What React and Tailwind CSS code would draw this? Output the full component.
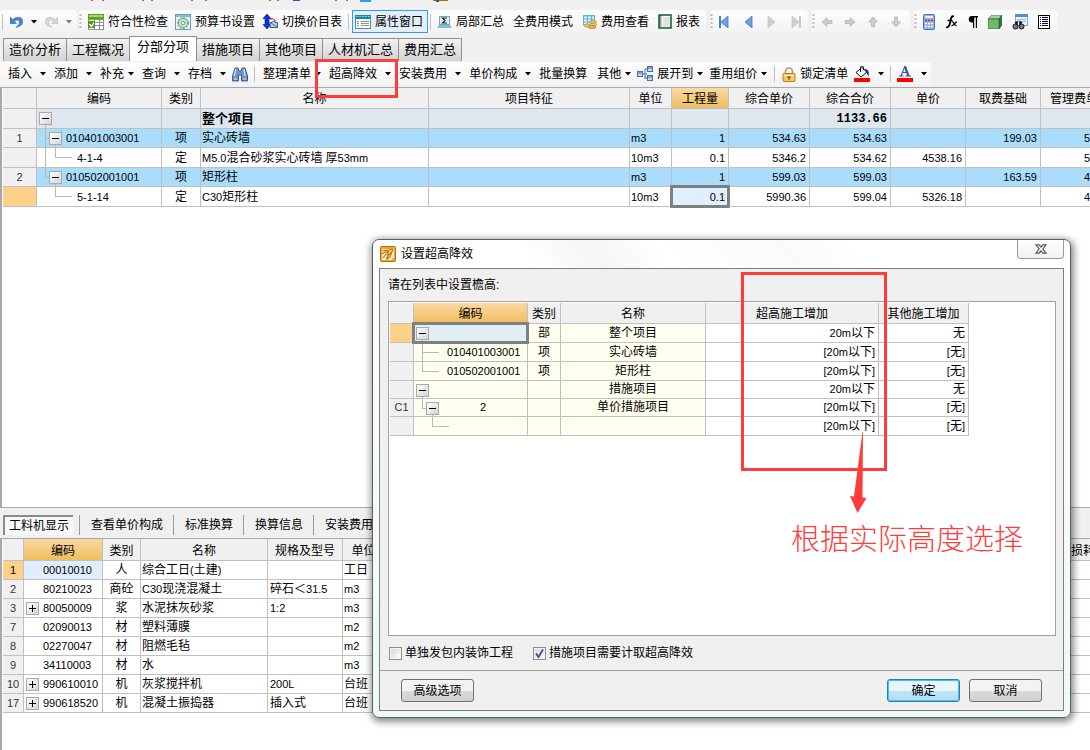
import React, { useState } from 'react';

const Svg = ({ w = 16, h = 16, className = '', children }) => (
  <svg width={w} height={h} viewBox={`0 0 ${w} ${h}`} className={`shrink-0 ${className}`} aria-hidden="true">
    {children}
  </svg>
);

const Caret = ({ color = '#000' }) => (
  <Svg w={6} h={4}>
    <path d="M0 0h6L3 3.500z" fill={color} />
  </Svg>
);

const UndoIcon = () => (
  <Svg w={13} h={14}>
    <path d="M0 2v6.500h6.500L4.500 6.500C6.500 4.400 9.300 4.600 9.300 7.400c0 2-1.300 3.400-3.500 5C9.800 11.800 12.800 10 12.800 6.600 12.800 1.800 7 .8 2.600 4.600z" fill="#4d84d4" stroke="#2f62b0" strokeWidth=".6" />
  </Svg>
);

const RedoIcon = () => (
  <Svg w={13} h={14}>
    <path d="M13 2v6.500H6.500L8.500 6.500C6.500 4.400 3.700 4.600 3.700 7.400c0 2 1.300 3.400 3.500 5C3.200 11.800.2 10 .2 6.600.2 1.800 6 .8 10.400 4.600z" fill="#d6d6d6" stroke="#bdbdbd" strokeWidth=".6" />
  </Svg>
);

const CheckSheetIcon = () => (
  <Svg>
    <rect x="0" y="0" width="16" height="16" fill="#8d938d" />
    <rect x="0" y="0" width="16" height="5" fill="#5aa51a" />
    <rect x="1" y="1" width="14" height="2" fill="#a5dd5a" />
    <path d="M1 6h5v2H1zM7 6h4v2H7zM12 6h3v2h-3zM1 9h5v6H1zM7 9h4v2H7zM12 9h3v2h-3zM7 12h4v3H7zM12 12h3v3h-3z" fill="#fff" />
    <rect x="0" y="7" width="7" height="7" fill="#4c9a10" />
    <path d="M1.500 10l2 2.500 2.500-4" fill="none" stroke="#fff" strokeWidth="1.400" />
  </Svg>
);

const GearSheetIcon = () => (
  <Svg>
    <rect x=".5" y=".5" width="15" height="15" fill="#e8f1f8" stroke="#6f9cc7" />
    <rect x="1" y="1" width="14" height="2" fill="#8db8e0" />
    <circle cx="8" cy="9" r="5.500" fill="none" stroke="#6fa56f" strokeDasharray="2 1.200" />
    <circle cx="8" cy="9" r="4.500" fill="#d6ecd2" stroke="#68a568" />
    <circle cx="8" cy="9" r="1.800" fill="#fff" stroke="#68a568" />
  </Svg>
);

const SwitchIcon = () => (
  <Svg>
    <path d="M5 0l4 4.500H7v6h2L5 15l-4-4.500h2v-6H1z" fill="#0b35d8" stroke="#001a80" strokeWidth=".6" />
    <path d="M8.500 6l1.500-2 1.500 2H13v3" fill="#e9f6ff" stroke="#d22" />
    <path d="M8 13.500V8.500h2l1.500-1.500L13 8.500h2.500v5z" fill="#8fe4ee" stroke="#137" strokeWidth=".8" />
    <path d="M9 9l6 4" stroke="#d22" strokeWidth=".8" />
  </Svg>
);

const PropsIcon = () => (
  <Svg>
    <rect x=".5" y="1.500" width="15" height="13" fill="#fff" stroke="#6c8b91" />
    <rect x="0" y="1" width="16" height="4" fill="#168aa8" />
    <path d="M1 2.500h14" stroke="#7bd7ea" strokeDasharray="2 1" />
    <path d="M2 7.500h2M2 9.500h2M2 11.500h2M6 7.500h8M6 9.500h8M6 11.500h8" stroke="#7e9a86" />
  </Svg>
);

const SumIcon = () => (
  <Svg w={15} h={14}>
    <rect x="2.500" y="1.500" width="10" height="8" fill="#e6eef0" stroke="#7da9b5" />
    <path d="M10 3H5.500L8 5.500 5.500 8H10" fill="none" stroke="#222" strokeWidth="1.200" />
    <path d="M2 10h11l2 3H0z" fill="#7cc4d0" />
  </Svg>
);

const CoinsIcon = () => (
  <Svg w={14} h={15}>
    <rect x="0" y="1" width="12" height="10" fill="#5fb1dd" />
    <path d="M1 3.500h3M5 3.500h3M9 3.500h2M1 6.500h3M5 6.500h3M9 6.500h2M1 9.500h3M5 9.500h3" stroke="#e3f5ff" strokeWidth="2" />
    <ellipse cx="10" cy="8" rx="3.500" ry="1.500" fill="#f2c66a" stroke="#a9752a" strokeWidth=".6" />
    <ellipse cx="10" cy="10.500" rx="3.500" ry="1.500" fill="#f2c66a" stroke="#a9752a" strokeWidth=".6" />
    <ellipse cx="9" cy="13" rx="4" ry="1.500" fill="#e9b450" stroke="#a9752a" strokeWidth=".6" />
    <ellipse cx="4" cy="11.500" rx="3" ry="1.500" fill="#f2c66a" stroke="#a9752a" strokeWidth=".6" />
  </Svg>
);

const ReportIcon = () => (
  <Svg w={14} h={15}>
    <rect x="1" y="1" width="12" height="13" fill="#fff" stroke="#0d5c22" strokeWidth="1.500" />
    <path d="M2.500 1.500v12" stroke="#333" strokeDasharray="1 1" strokeWidth="2" />
    <path d="M5 4h7M5 6h7M5 8h7M5 10h7M5 12h7" stroke="#a9b8c8" strokeWidth=".8" />
  </Svg>
);

const NavIcon = ({ flip, bar, off }) => (
  <Svg w={10} h={12} className={flip ? '-scale-x-100' : ''}>
    {bar && <rect x="0" y="0" width="2" height="12" fill={off ? '#c9c9c9' : '#4a80d0'} />}
    <path d="M9 0v12L2 6z" fill={off ? '#cfcfcf' : '#6f9fe8'} stroke={off ? '#c4c4c4' : '#3f74c8'} strokeWidth=".8" />
  </Svg>
);

const MoveIcon = ({ turn }) => (
  <Svg w={12} h={12} className={turn}>
    <path d="M1 6l5-4.500v3h5v3H6v3z" fill="#cdcdcd" stroke="#b4b4b4" strokeWidth=".8" />
  </Svg>
);

const CalcIcon = () => (
  <Svg w={12} h={16}>
    <rect x=".5" y=".5" width="11" height="15" rx="1" fill="#8db0e6" stroke="#4a6fb5" />
    <rect x="2" y="2" width="8" height="2" fill="#e8f2ff" />
    <path d="M2 6.500h8" stroke="#e02020" strokeWidth="1.500" strokeDasharray="2 1" />
    <path d="M2 9.500h8M2 12.500h8" stroke="#fff" strokeWidth="1.500" strokeDasharray="2 1" />
  </Svg>
);

const FxIcon = () => (
  <Svg w={13} h={14}>
    <path d="M9 1.500C6.500.5 6 3 5.500 6S4 13 1 12.200" fill="none" stroke="#000" strokeWidth="1.800" />
    <path d="M2.500 5.500h5M7 7c2-.8 2 4 4.500 3.500M12 6.800c-2 0-3 4-5.500 4" fill="none" stroke="#000" strokeWidth="1.300" />
  </Svg>
);

const PilcrowIcon = () => (
  <Svg w={10} h={12}>
    <path d="M10 0v1.500H9V12H7.800V1.500H6.200V12H5V6.500H4a3.200 3.200 0 010-6.500z" fill="#000" />
  </Svg>
);

const CubeIcon = () => (
  <Svg w={14} h={14}>
    <path d="M0 4l4-4h10l-3 4z" fill="#9fd59b" stroke="#25602a" strokeWidth=".6" />
    <path d="M11 4l3-4v10l-3 4z" fill="#2b7a33" stroke="#25602a" strokeWidth=".6" />
    <path d="M0 4h11v10H0z" fill="#6fb86c" stroke="#25602a" strokeWidth=".6" />
  </Svg>
);

const FindSheetIcon = () => (
  <Svg>
    <rect x="3.500" y=".5" width="12" height="11" fill="#eef4fc" stroke="#8aa6d0" />
    <rect x="3" y="0" width="13" height="3" fill="#5b8ad0" />
    <path d="M5 5.500h9M5 7.500h9" stroke="#9ab4da" />
    <circle cx="3.500" cy="12.500" r="2.500" fill="#6d7f94" stroke="#111" />
    <circle cx="9.500" cy="12.500" r="2.500" fill="#6d7f94" stroke="#111" />
    <path d="M3 9l2-1v3M10 9L8 8v3" stroke="#111" strokeWidth="1.500" fill="none" />
  </Svg>
);

const ListIcon = () => (
  <Svg w={12} h={14}>
    <rect x=".5" y=".5" width="11" height="13" fill="#fff" stroke="#000" />
    <path d="M2 2.500h1M4 2.500h6M2 4.500h1M4 4.500h6M2 6.500h1M4 6.500h6M2 8.500h1M4 8.500h6M2 10.500h1M4 10.500h6" stroke="#00006a" />
  </Svg>
);

const BinocularsIcon = () => (
  <Svg w={16} h={15}>
    <path d="M3 1h3l1 3h2l1-3h3l2.500 8v5h-6V8h-3v6H.5V9z" fill="#6f95cc" stroke="#2c4f86" strokeWidth=".9" />
    <path d="M4 2l-2 7M12 2l1 7M2 12h3M11 12h3" stroke="#dce9fa" strokeWidth="1.200" />
  </Svg>
);

const ExpandIcon = () => (
  <Svg w={16} h={16}>
    <path d="M6 8h4M8 3v10M8 3h3M8 12h3" stroke="#4a6fb0" fill="none" />
    <rect x=".5" y="5.500" width="5" height="5" fill="#c4d8f5" stroke="#4a6fb0" />
    <rect x="10.500" y=".5" width="5" height="5" fill="#c4d8f5" stroke="#4a6fb0" />
    <rect x="10.500" y="9.500" width="5" height="5" fill="#c4d8f5" stroke="#4a6fb0" />
    <path d="M11 2h4M11 11h4M1 7h4" stroke="#3c62a8" />
  </Svg>
);

const LockIcon = () => (
  <Svg w={14} h={15}>
    <path d="M3.500 7V4.500a3.500 3.500 0 017 0V7" fill="none" stroke="#b09a66" strokeWidth="1.600" />
    <rect x="1" y="6.500" width="12" height="8" rx="1" fill="#f3c860" stroke="#b3801e" />
    <path d="M2 8.500h10" stroke="#fff0b8" />
    <path d="M5.500 9.500h3v1.500H7.500v2h-1v-2h-1z" fill="#6c4a0a" />
  </Svg>
);

const PaintIcon = () => (
  <Svg w={16} h={16}>
    <path d="M2 6.500l6-5 5 4.500-6 5z" fill="#fff" stroke="#111" />
    <path d="M6.500 6V1.500a1.500 1.500 0 013 0V4" fill="none" stroke="#111" />
    <path d="M10 3c4 0 5.500 2 4.500 7.500L12 6z" fill="#16249c" />
    <rect x="0" y="12" width="16" height="4" fill="#f00" />
  </Svg>
);

const FontColorIcon = () => (
  <Svg w={16} h={16}>
    <path d="M7.500 0H9l3.500 9.500H14v1H8.500v-1H10L9.300 7H5.800L5 9.500h1.500v1H2v-1h1.500zM7.500 2.500L6.200 6h2.600z" fill="#33589c" />
    <rect x="0" y="12" width="16" height="4" fill="#f00" />
  </Svg>
);

const AppIcon = () => (
  <Svg>
    <rect x=".5" y=".5" width="15" height="15" rx="1" fill="#f0a52c" stroke="#b96c08" />
    <path d="M2 3h9l3-1v9l-3 3H2z" fill="#fff3d6" />
    <path d="M2 5l5-1M2 8l6-4M3 12l7-9M6 13l6-8M9 4l4-1-3 8-3 2z" stroke="#c8740c" fill="none" strokeWidth="1.200" />
  </Svg>
);

const Sep = ({ className = '' }) => <span className={`h-4 w-px shrink-0 bg-[#bdbdbd] ${className}`} />;

const Grip = () => (
  <Svg w={3} h={15} className="mr-1.5">
    <path d="M1.500 0v15" stroke="#bcbcbc" strokeWidth="2" strokeDasharray="2 2" />
  </Svg>
);

const Group = ({ className = '', children }) => (
  <div className={`flex h-6 shrink-0 items-center rounded-sm bg-gradient-to-b from-[#fdfdfd] to-[#f2f2f2] ${className}`}>
    {children}
  </div>
);

const ToolButton = ({ icon, label, className = '' }) => (
  <button type="button" className={`flex shrink-0 items-center gap-1 whitespace-nowrap ${className}`}>
    {icon}
    {label && <span>{label}</span>}
  </button>
);

const DropButton = ({ label, icon, name, tight, className = '' }) => (
  <button
    type="button"
    aria-label={name}
    className={`flex shrink-0 items-center whitespace-nowrap ${tight ? 'gap-1' : 'gap-2'} ${className}`}
  >
    {icon ? <span className="flex items-center gap-1">{icon}{label}</span> : <span>{label}</span>}
    <Caret />
  </button>
);

const MainToolbar = () => (
  <div className="flex h-[25px] items-center">
    <Group className="w-[77px] pl-0.5">
      <Sep className="mr-[7px]" />
      <button type="button" aria-label="撤销" className="flex items-center gap-2"><UndoIcon /><Caret /></button>
      <button type="button" aria-label="恢复" className="ml-2 flex items-center gap-2"><RedoIcon /><Caret color="#777" /></button>
    </Group>
    <Group className="ml-0.5 pr-1.5">
      <Grip />
      <div className="flex items-center gap-[7px]">
        <ToolButton icon={<CheckSheetIcon />} label="符合性检查" />
        <ToolButton icon={<GearSheetIcon />} label="预算书设置" />
        <ToolButton icon={<SwitchIcon />} label="切换价目表" />
      </div>
      <Sep className="ml-1.5 mr-[3px]" />
      <ToolButton icon={<PropsIcon />} label="属性窗口" className="h-[23px] border border-[#3399ff] bg-[#e3f0fb] pl-0.5 pr-1" />
      <Sep className="ml-0.5 mr-1.5" />
      <ToolButton icon={<SumIcon />} label="局部汇总" className="mr-[9px]" />
      <ToolButton label="全费用模式" className="mr-2.5" />
      <ToolButton icon={<CoinsIcon />} label="费用查看" className="mr-[9px]" />
      <ToolButton icon={<ReportIcon />} label="报表" />
    </Group>
    <Group className="ml-1 w-[98px]">
      <Grip />
      <div className="flex items-center gap-3.5">
        <button type="button" aria-label="首行"><NavIcon bar /></button>
        <button type="button" aria-label="上一行"><NavIcon /></button>
        <button type="button" aria-label="下一行"><NavIcon flip off /></button>
        <button type="button" aria-label="末行"><NavIcon flip bar off /></button>
      </div>
    </Group>
    <Group className="ml-1 w-[98px]">
      <Grip />
      <div className="flex items-center gap-[11px]">
        <button type="button" aria-label="左移"><MoveIcon /></button>
        <button type="button" aria-label="右移"><MoveIcon turn="rotate-180" /></button>
        <button type="button" aria-label="上移"><MoveIcon turn="rotate-90" /></button>
        <button type="button" aria-label="下移"><MoveIcon turn="-rotate-90" /></button>
      </div>
    </Group>
    <Group className="ml-1 pr-2">
      <Grip />
      <div className="flex items-center gap-2.5">
        <button type="button" aria-label="计算器"><CalcIcon /></button>
        <button type="button" aria-label="函数"><FxIcon /></button>
        <button type="button" aria-label="段落"><PilcrowIcon /></button>
        <button type="button" aria-label="图元"><CubeIcon /></button>
        <button type="button" aria-label="查找"><FindSheetIcon /></button>
        <button type="button" aria-label="清单"><ListIcon /></button>
      </div>
    </Group>
  </div>
);

const mainTabs = ['造价分析', '工程概况', '分部分项', '措施项目', '其他项目', '人材机汇总', '费用汇总'];

const MainTabs = () => {
  const [active, setActive] = useState('分部分项');
  return (
    <div className="mt-0.5 flex items-end pl-1 text-[13px]">
      {mainTabs.map((tab) => (
        <button
          key={tab}
          type="button"
          onClick={() => setActive(tab)}
          className={
            tab === active
              ? '-ml-px h-[25px] whitespace-nowrap border-x border-t border-[#8e8f9b] bg-white px-[7px] pb-1 leading-5'
              : '-ml-px h-[23px] whitespace-nowrap border-x border-t border-[#8e8f9b] bg-gradient-to-b from-[#f3f3f3] to-[#d2d2d2] px-[5px] leading-5'
          }
        >
          {tab}
        </button>
      ))}
    </div>
  );
};

const EditToolbar = () => (
  <div className="flex h-[27px] items-center border-b border-[#a7a7ad]">
    <Group className="gap-2 pl-2 pr-1">
      <DropButton label="插入" />
      <DropButton label="添加" />
      <DropButton label="补充" tight />
      <DropButton label="查询" />
      <DropButton label="存档" />
      <button type="button" aria-label="查找" className="-ml-0.5"><BinocularsIcon /></button>
      <Sep className="-ml-0.5" />
      <DropButton label="整理清单" tight />
      <DropButton label="超高降效" />
      <DropButton label="安装费用" />
      <DropButton label="单价构成" />
      <ToolButton label="批量换算" />
      <DropButton label="其他" tight className="ml-0.5" />
      <DropButton icon={<ExpandIcon />} label="展开到" tight className="-ml-0.5" />
      <DropButton label="重用组价" tight className="-ml-0.5" />
      <Sep className="-mx-px" />
      <ToolButton icon={<LockIcon />} label="锁定清单" />
      <DropButton icon={<PaintIcon />} name="填充颜色" className="-ml-0.5" />
      <Sep className="-mx-0.5" />
      <DropButton icon={<FontColorIcon />} name="字体颜色" />
    </Group>
  </div>
);

// Expand / collapse box of a tree row
const Toggle = ({ open }) => (
  <button
    type="button"
    aria-label={open ? '折叠' : '展开'}
    className="relative z-10 block h-[13px] w-[13px] border border-[#a9a9a9] bg-gradient-to-br from-white to-[#d4d4d8]"
  >
    <svg viewBox="0 0 11 11" className="h-[11px] w-[11px]" shapeRendering="crispEdges">
      <rect x="2" y="5" width="7" height="1" fill="#000" />
      {!open && <rect x="5" y="2" width="1" height="7" fill="#000" />}
    </svg>
  </button>
);

const TreeLines = ({ d }) => (
  <svg className="absolute left-0 top-0 h-5 w-10" viewBox="0 0 40 20" shapeRendering="crispEdges" aria-hidden="true">
    <path d={d} fill="none" stroke="#b9b9b9" />
  </svg>
);

// Latin letters and digits sit one size below the Chinese text
const Mixed = ({ text }) =>
  text.split(/([\x20-\x7e]+)/).map((part, i) => (
    <span key={i} className={i % 2 ? 'text-[11px]' : ''}>{part}</span>
  ));

const cell = 'relative overflow-hidden whitespace-nowrap border-b border-r border-[#c0c0c0] p-0 font-normal';
const gutter = `${cell} bg-[#f0f0f0] text-center text-[11px] text-[#333]`;
const gutterOn = `${cell} bg-[#ffd08a] text-center text-[11px]`;
const head = `${cell} bg-[#f0f0f0] pt-0.5 text-center`;
const headOn = `${cell} bg-gradient-to-b from-[#fad9a0] to-[#f0bd5c] pt-0.5 text-center`;

const quantityRows = [
  { no: '', lines: 'M8.500 16v4', toggle: 'left-0.5', name: '整个项目', kind: '', unit: '', total: '1133.66', top: true },
  { no: '1', lines: 'M8.500 0v20M8.500 9.500h4M18.500 16v4', toggle: 'left-3', code: '010401003001', kind: '项', name: '实心砖墙', unit: 'm3', qty: '1', price: '534.63', total: '534.63', unitPrice: '', base: '199.03', fee: '5' },
  { no: '', lines: 'M8.500 0v20M18.500 0v10M18 9.500h17', code: '4-1-4', kind: '定', name: 'M5.0混合砂浆实心砖墙 厚53mm', unit: '10m3', qty: '0.1', price: '5346.2', total: '534.62', unitPrice: '4538.16', base: '', fee: '5' },
  { no: '2', lines: 'M8.500 0v10M8 9.500h4M18.500 16v4', toggle: 'left-3', code: '010502001001', kind: '项', name: '矩形柱', unit: 'm3', qty: '1', price: '599.03', total: '599.03', unitPrice: '', base: '163.59', fee: '4' },
  { no: '', lines: 'M18.500 0v10M18 9.500h17', code: '5-1-14', kind: '定', name: 'C30矩形柱', unit: '10m3', qty: '0.1', price: '5990.36', total: '599.04', unitPrice: '5326.18', base: '', fee: '4', current: true },
];

const rowStyle = (row) => {
  if (row.top) return 'h-[19px] bg-[#dee6f0]';
  if (row.kind === '项') return 'h-[19px] bg-[#aadcfc]';
  return 'h-5 bg-white';
};

const QuantityTable = () => {
  const num = `${cell} pr-[3px] text-right text-[11px]`;
  return (
    <table className="w-full min-w-[1119px] table-fixed border-separate border-spacing-0 leading-[18px]">
      <colgroup>
        <col className="w-[34px]" />
        <col className="w-[125px]" />
        <col className="w-[39px]" />
        <col className="w-[228px]" />
        <col className="w-[201px]" />
        <col className="w-[42px]" />
        <col className="w-[57px]" />
        <col className="w-[81px]" />
        <col className="w-[81px]" />
        <col className="w-[75px]" />
        <col className="w-[75px]" />
        <col />
      </colgroup>
      <thead>
        <tr className="h-[21px]">
          <th className={gutter} />
          <th className={head}>编码</th>
          <th className={head}>类别</th>
          <th className={head}>名称</th>
          <th className={head}>项目特征</th>
          <th className={head}>单位</th>
          <th className={headOn}>工程量</th>
          <th className={head}>综合单价</th>
          <th className={head}>综合合价</th>
          <th className={head}>单价</th>
          <th className={head}>取费基础</th>
          <th className={`${head} pl-[9px] text-left`}>管理费单</th>
        </tr>
      </thead>
      <tbody>
        {quantityRows.map((row, i) => (
          <tr key={i} className={rowStyle(row)}>
            <td className={row.current ? gutterOn : gutter}>{row.no}</td>
            <td className={`${cell} text-[11px]`}>
              <TreeLines d={row.lines} />
              {row.toggle && <span className={`absolute top-[3px] ${row.toggle}`}><Toggle open /></span>}
              <span className={row.toggle ? 'pl-[29px]' : 'pl-10'}>{row.code}</span>
            </td>
            <td className={`${cell} text-center`}>{row.kind}</td>
            <td className={`${cell} pl-px`}>
              {row.top ? <b className="text-[13px]">{row.name}</b> : <Mixed text={row.name} />}
            </td>
            <td className={cell} />
            <td className={`${cell} pl-px text-[11px]`}>{row.unit}</td>
            <td className={row.current ? 'relative border-b border-r border-[#c0c0c0] bg-[#e0efff] p-0 pr-[3px] text-right text-[11px]' : num}>
              {row.qty}
              {row.current && <span className="absolute -inset-0.5 border-[3px] border-[#808080]" />}
            </td>
            <td className={num}>{row.price}</td>
            <td className={num}>
              {row.top ? <b className="font-['Liberation_Mono'] text-xs leading-[18px]">{row.total}</b> : row.total}
            </td>
            <td className={num}>{row.unitPrice}</td>
            <td className={num}>{row.base}</td>
            <td className={`${cell} pl-[43px] text-[11px]`}>{row.fee}</td>
          </tr>
        ))}
      </tbody>
    </table>
  );
};

const detailTabs = ['查看单价构成', '标准换算', '换算信息', '安装费用'];

const DetailTabs = () => (
  <div className="flex h-[31px] items-center border-b border-[#a7a7ad] pl-[3px] pt-1">
    <button type="button" className="mr-1.5 h-5 whitespace-nowrap border-l-2 border-t-2 border-[#8a8a8a] bg-[#f7f7f7] px-1 leading-[18px]">
      工料机显示
    </button>
    {detailTabs.map((tab) => (
      <button key={tab} type="button" className="h-5 whitespace-nowrap border-l border-[#9a9a9a] pl-[11px] pr-2.5 leading-5">
        {tab}
      </button>
    ))}
  </div>
);

const resources = [
  { no: '1', code: '00010010', kind: '人', name: '综合工日(土建)', spec: '', unit: '工日', current: true },
  { no: '2', code: '80210023', kind: '商砼', name: 'C30现浇混凝土', spec: '碎石＜31.5', unit: 'm3' },
  { no: '3', code: '80050009', kind: '浆', name: '水泥抹灰砂浆', spec: '1:2', unit: 'm3', more: true },
  { no: '7', code: '02090013', kind: '材', name: '塑料薄膜', spec: '', unit: 'm2' },
  { no: '8', code: '02270047', kind: '材', name: '阻燃毛毡', spec: '', unit: 'm2' },
  { no: '9', code: '34110003', kind: '材', name: '水', spec: '', unit: 'm3' },
  { no: '10', code: '990610010', kind: '机', name: '灰浆搅拌机', spec: '200L', unit: '台班', more: true },
  { no: '17', code: '990618520', kind: '机', name: '混凝土振捣器', spec: '插入式', unit: '台班', more: true },
];

const ResourceTable = () => (
  <table className="w-full table-fixed border-separate border-spacing-0 leading-[18px]">
    <colgroup>
      <col className="w-[21px]" />
      <col className="w-[79px]" />
      <col className="w-[38px]" />
      <col className="w-[127px]" />
      <col className="w-[75px]" />
      <col className="w-[38px]" />
      <col />
      <col className="w-[19px]" />
    </colgroup>
    <thead>
      <tr className="h-[22px]">
        <th className={gutter} />
        <th className={headOn}>编码</th>
        <th className={head}>类别</th>
        <th className={head}>名称</th>
        <th className={head}>规格及型号</th>
        <th className={`${head} pl-1`}>单位</th>
        <th className="border-b border-[#c0c0c0] bg-[#f0f0f0] p-0" />
        <th className="overflow-hidden whitespace-nowrap border-b border-[#c0c0c0] bg-[#f0f0f0] p-0 pt-0.5 text-left font-normal">损耗</th>
      </tr>
    </thead>
    <tbody>
      {resources.map((row) => (
        <tr key={row.no} className="h-[19px] bg-white">
          <td className={row.current ? gutterOn : gutter}>{row.no}</td>
          <td className={row.current ? `${cell} bg-[#e0efff] text-[11px]` : `${cell} text-[11px]`}>
            {row.more && <span className="absolute left-0.5 top-[3px]"><Toggle /></span>}
            <span className="pl-[19px]">{row.code}</span>
          </td>
          <td className={`${cell} text-center`}>{row.kind}</td>
          <td className={`${cell} pl-px`}><Mixed text={row.name} /></td>
          <td className={`${cell} pl-0.5`}><Mixed text={row.spec} /></td>
          <td className={`${cell} pl-px`}><Mixed text={row.unit} /></td>
          <td className="border-b border-[#c0c0c0] p-0" />
          <td className="border-b border-[#c0c0c0] p-0" />
        </tr>
      ))}
    </tbody>
  </table>
);

const heightRows = [
  { toggle: 'left-0.5', lines: 'M8.500 16v4', code: '', kind: '部', name: '整个项目', high: '20m以下', other: '无', size: 'h-[19px]', current: true },
  { lines: 'M8.500 0v20M8 9.500h17', code: '010401003001', kind: '项', name: '实心砖墙', high: '[20m以下]', other: '[无]', size: 'h-[19px]' },
  { lines: 'M8.500 0v10M8 9.500h17', code: '010502001001', kind: '项', name: '矩形柱', high: '[20m以下]', other: '[无]', size: 'h-[19px]' },
  { toggle: 'left-0.5', lines: 'M8.500 16v4', code: '', kind: '', name: '措施项目', high: '20m以下', other: '无', size: 'h-[18px]' },
  { no: 'C1', toggle: 'left-3', lines: 'M8.500 0v10M8 9.500h4M18.500 16v4', code: '2', kind: '', name: '单价措施项目', high: '[20m以下]', other: '[无]', size: 'h-[18px]' },
  { lines: 'M18.500 0v10M18 9.500h17', code: '', kind: '', name: '', high: '[20m以下]', other: '[无]', size: 'h-[19px]' },
];

const HeightTable = () => {
  const tinted = `${cell} bg-[#fffff0] text-center`;
  return (
    <table className="w-[579px] table-fixed border-separate border-spacing-0 leading-[17px]">
      <colgroup>
        <col className="w-6" />
        <col className="w-[114px]" />
        <col className="w-[33px]" />
        <col className="w-[145px]" />
        <col className="w-[173px]" />
        <col className="w-[90px]" />
      </colgroup>
      <thead>
        <tr className="h-[21px]">
          <th className={gutter} />
          <th className={headOn}>编码</th>
          <th className={head}>类别</th>
          <th className={head}>名称</th>
          <th className={head}>超高施工增加</th>
          <th className={head}>其他施工增加</th>
        </tr>
      </thead>
      <tbody>
        {heightRows.map((row, i) => (
          <tr key={i} className={row.size}>
            <td className={row.current ? gutterOn : gutter}>{row.no}</td>
            <td className={row.current ? 'relative border-b border-r border-[#c0c0c0] bg-[#e0eff4] p-0' : `${cell} bg-[#fffff0] text-[11px]`}>
              <TreeLines d={row.lines} />
              {row.toggle && <span className={`absolute top-[3px] z-10 ${row.toggle}`}><Toggle open /></span>}
              <span className={row.code === '2' ? 'pl-[66px]' : 'pl-[33px]'}>{row.code}</span>
              {row.current && <span className="absolute -inset-0.5 z-20 border-[3px] border-[#808080]" />}
            </td>
            <td className={tinted}>{row.kind}</td>
            <td className={tinted}>{row.name}</td>
            <td className={`${cell} pr-[3px] text-right`}><Mixed text={row.high} /></td>
            <td className={`${cell} pr-[3px] text-right`}><Mixed text={row.other} /></td>
          </tr>
        ))}
      </tbody>
    </table>
  );
};

const CheckOption = ({ id, label, initial }) => {
  const [checked, setChecked] = useState(initial);
  return (
    <div className="flex items-center gap-[3px]">
      <span className="relative h-[13px] w-[13px]">
        <input
          id={id}
          type="checkbox"
          checked={checked}
          onChange={(e) => setChecked(e.target.checked)}
          className="block h-[13px] w-[13px] appearance-none border border-[#8e8f8f] bg-gradient-to-br from-[#cfd4da] to-white outline outline-1 -outline-offset-2 outline-[#f4f4f4]"
        />
        {checked && (
          <svg viewBox="0 0 13 13" className="pointer-events-none absolute inset-0 h-[13px] w-[13px]" aria-hidden="true">
            <path d="M3 6.500l2.500 3.500L10 2.500" fill="none" stroke="#3c4f9c" strokeWidth="1.800" />
          </svg>
        )}
      </span>
      <label htmlFor={id}>{label}</label>
    </div>
  );
};

const plainButton = 'h-[23px] w-[73px] rounded-[3px] border border-[#707070] bg-[linear-gradient(#f3f3f3_50%,#dcdcdc_50%,#cfcfcf)] leading-5';

const HeightDialog = () => (
  <section
    role="dialog"
    aria-labelledby="height-title"
    className="absolute left-[372px] right-[19px] top-[239px] rounded-[7px] border border-[#5c5f60] bg-gradient-to-b from-white via-[#f6fbfb] to-[#eef9f9] px-1.5 pb-1.5 shadow-[1px_2px_7px_2px_rgba(0,0,0,0.45)]"
  >
    <header className="flex h-7 items-start justify-between bg-[linear-gradient(50deg,#fff_22%,#f5f5f5_32%,#fff_42%,#fafafa_60%,#fff_70%)]">
      <div className="flex items-center gap-[5px] pl-px pt-1.5">
        <AppIcon />
        <h2 id="height-title" className="leading-4">设置超高降效</h2>
      </div>
      <button type="button" aria-label="关闭" className="flex h-[19px] w-[47px] items-center justify-center rounded-b-[4px] border border-t-0 border-[#9a9a9a] bg-gradient-to-b from-white to-[#f1f1f1]">
        <Svg w={12} h={10}>
          <path d="M1 .8h3l2 2.200L8 .8h3L7.800 5 11 9.200H8L6 7 4 9.200H1L4.200 5z" fill="#fff" stroke="#50545f" strokeWidth="1.200" />
        </Svg>
      </button>
    </header>
    <div className="border border-[#7d7d7d] bg-[#f0f0f0]">
      <div className="pl-2 pr-[7px] pt-2">
        <p className="leading-4">请在列表中设置檐高:</p>
        <div className="mt-2 min-h-[335px] border border-[#a0a0a8] bg-white pl-px pt-px">
          <HeightTable />
        </div>
        <div className="flex h-[34px] items-center gap-5 pl-px">
          <CheckOption id="decor" label="单独发包内装饰工程" initial={false} />
          <CheckOption id="measure" label="措施项目需要计取超高降效" initial />
        </div>
      </div>
      <footer className="flex items-center border-t border-[#9d9d9d] px-[21px] py-2">
        <button type="button" className={plainButton}>高级选项</button>
        <button type="button" className="ml-auto h-[23px] w-[73px] rounded-[3px] border border-[#2c7fb0] bg-[linear-gradient(#e8f5fc_50%,#c3e4f8_50%,#b4dcf5)] leading-5 shadow-[inset_0_0_0_1px_#36c8f5]">
          确定
        </button>
        <button type="button" className={`${plainButton} ml-[9px]`}>取消</button>
      </footer>
    </div>
  </section>
);

// Red marks drawn over the window
const Notes = () => (
  <div className="pointer-events-none text-[#ff3b3b]">
    <div className="absolute left-[315px] top-[59px] h-[39px] w-[83px] border-[3px] border-[#ff3b3b]" />
    <div className="absolute left-[741px] top-[272px] h-[199px] w-[146px] border-[3px] border-[#ff3b3b]" />
    <svg className="absolute left-[849px] top-[432px] h-[82px] w-[18px]" viewBox="0 0 18 82" aria-hidden="true">
      <path d="M13.500 0l.5 0-.5 65.500 4 .5L8.500 81 1 64l4 .5z" fill="#ff3b3b" />
    </svg>
    <p className="absolute left-[791px] top-[522px] whitespace-nowrap text-[29px] font-light leading-9">根据实际高度选择</p>
  </div>
);

const App = () => (
  <div className="relative flex min-h-screen flex-col overflow-hidden bg-[#f0f0f0] font-['Liberation_Sans','Noto_Sans_CJK_SC',sans-serif] text-xs text-black">
    <svg className="h-[9px] w-full" aria-hidden="true">
      <path d="M91 .5h2M102 .5h2M142 .5h2M151 .5h2M191 .5h2M205 .5h2M269 .5h2M277 .5h2M335 .5h2M346 .5h2" stroke="#a8702c" />
      <path d="M293 .5h7" stroke="#5a4c9c" />
      <path d="M360 1h11" stroke="#2a9fe8" strokeWidth="2" />
      <path d="M433 .5h15" stroke="#b8690c" />
      <path d="M436 1h3" stroke="#1c5a8c" strokeWidth="2" />
    </svg>
    <MainToolbar />
    <MainTabs />
    <EditToolbar />
    <main className="flex-1 overflow-hidden border-b border-l-2 border-[#a7a7ad] bg-white pl-px">
      <QuantityTable />
    </main>
    <DetailTabs />
    <section className="overflow-hidden border-l-2 border-[#a7a7ad] bg-white pb-[37px] pl-px">
      <ResourceTable />
    </section>
    <HeightDialog />
    <Notes />
  </div>
);

export default App;
